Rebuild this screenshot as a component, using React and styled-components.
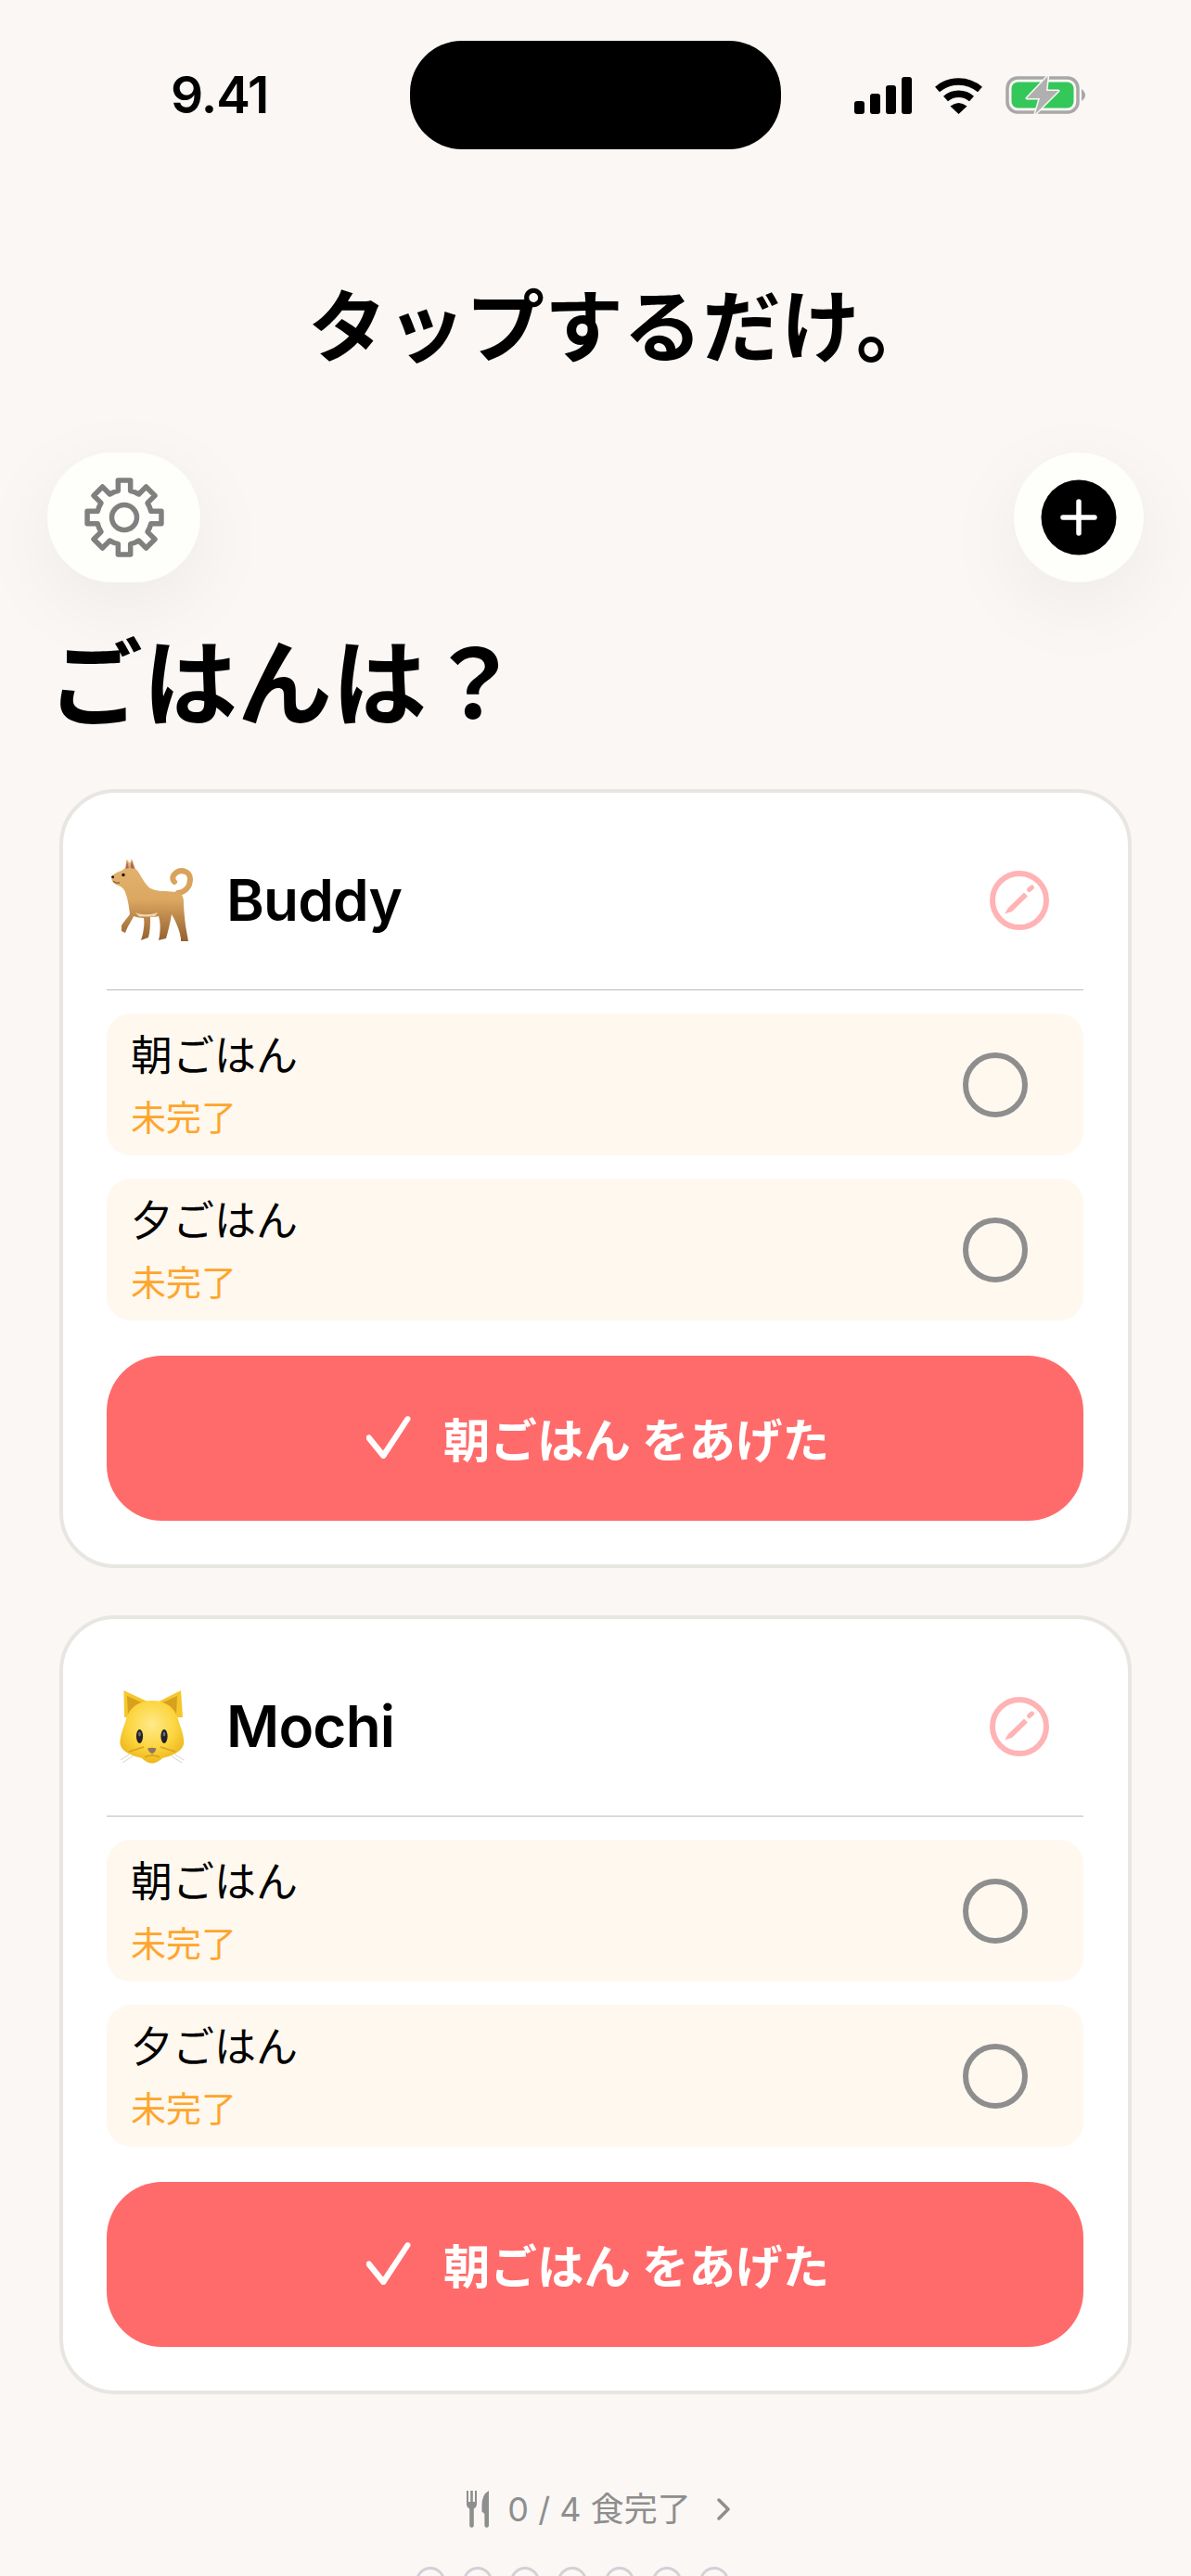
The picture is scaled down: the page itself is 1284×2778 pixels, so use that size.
import React from "react";
import styled, { createGlobalStyle } from "styled-components";

const GlobalStyle = createGlobalStyle`
  html, body {
    margin: 0;
    padding: 0;
    background: #faf7f4;
  }
  body {
    font-family: Inter, "Noto Sans CJK JP", sans-serif;
    color: #000;
  }
`;

const Page = styled.div`
  width: 1284px;
  height: 2778px;
  overflow: hidden;
  background: #faf7f4;
`;

const StatusBar = styled.div`
  display: grid;
  grid-template-columns: 258px 400px 1fr;
  align-items: center;
  padding: 44px 0 0 184px;
`;

const Time = styled.div`
  font-size: 55px;
  font-weight: 600;
  line-height: 1;
  letter-spacing: -1px;
`;

const Island = styled.div`
  height: 117px;
  background: #000;
  border-radius: 56px;
`;

const StatusIcons = styled.div`
  display: flex;
  align-items: center;
  gap: 24px;
  padding-left: 79px;
`;

const Title = styled.h1`
  margin: 151px 0 0;
  padding-left: 56px;
  font-size: 85px;
  line-height: 84px;
  font-weight: 700;
  text-align: center;
`;

const Toolbar = styled.div`
  display: flex;
  justify-content: space-between;
  align-items: center;
  padding: 0 51px;
  margin-top: 92px;
`;

const RoundButton = styled.button`
  display: flex;
  align-items: center;
  justify-content: center;
  width: ${(p) => p.$w}px;
  height: 140px;
  padding: 0;
  border: none;
  border-radius: 70px;
  background: #fefefa;
  box-shadow: 0 24px 90px rgba(0, 0, 0, 0.06);
`;

const Heading = styled.h2`
  margin: 60px 0 0;
  padding-left: 52px;
  font-size: 102px;
  line-height: 100px;
  font-weight: 700;
`;

const CardList = styled.div`
  display: flex;
  flex-direction: column;
  gap: 51px;
  padding: 0 64px;
  margin-top: 63px;
`;

const Card = styled.section`
  padding: 0 48px 47px 47px;
  background: #fff;
  border: 4px solid #e8e6e1;
  border-radius: 60px;
`;

const CardHeader = styled.div`
  display: flex;
  align-items: center;
  height: 213px;
  padding: 20px 37px 0 5px;
  border-bottom: 1px solid #bcbcbf;
  box-sizing: border-box;
`;

const Emoji = styled.div`
  display: flex;
  justify-content: center;
  width: 88px;
  margin-right: 36px;
`;

const PetName = styled.div`
  flex: 1;
  font-size: 62px;
  font-weight: 600;
  line-height: 1;
  letter-spacing: -0.8px;
`;

const MealList = styled.div`
  display: flex;
  flex-direction: column;
  gap: 25px;
  margin-top: 25px;
`;

const MealRow = styled.div`
  display: flex;
  align-items: center;
  justify-content: space-between;
  height: 153px;
  padding: 0 60px 0 26px;
  background: #fef8ef;
  border-radius: 26px;
`;

const MealText = styled.div`
  display: flex;
  flex-direction: column;
  gap: 18px;
  margin-top: 2px;
`;

const MealName = styled.div`
  font-size: 45px;
  line-height: 50px;
`;

const MealStatus = styled.div`
  font-size: 38px;
  line-height: 46px;
  color: #ffa52b;
`;

const CheckCircle = styled.div`
  width: 70px;
  height: 70px;
  box-sizing: border-box;
  border: 6.5px solid #8e8e8e;
  border-radius: 50%;
`;

const FeedButton = styled.button`
  display: flex;
  align-items: center;
  justify-content: center;
  gap: 34px;
  width: 100%;
  height: 178px;
  margin-top: 38px;
  padding: 0 0 3px 5px;
  border: none;
  border-radius: 60px;
  background: #ff6b6b;
  color: #fff;
  font-family: Inter, "Noto Sans CJK JP", sans-serif;
  font-size: 50.5px;
  font-weight: 700;
`;

const Summary = styled.div`
  display: flex;
  align-items: center;
  justify-content: center;
  margin-top: 104px;
  padding-left: 6px;
  color: #8e8e8e;
  font-size: 36px;
  line-height: 40px;
`;

const SummaryText = styled.span`
  margin: 0 28px 0 20px;
`;

const Dots = styled.div`
  display: flex;
  justify-content: center;
  gap: 19px;
  margin-top: 42px;
  padding-right: 50px;
`;

const Dot = styled.div`
  width: 32px;
  height: 32px;
  box-sizing: border-box;
  border: 3px solid #d1d1d6;
  border-radius: 50%;
`;

// 8 tooth gear outline, easier to compute than to write by hand
const gearPath = (() => {
  const c = 43;
  const pt = (r, deg) => {
    const a = (deg * Math.PI) / 180;
    return `${(c + r * Math.cos(a)).toFixed(2)} ${(c + r * Math.sin(a)).toFixed(2)}`;
  };
  let d = "";
  for (let i = 0; i < 8; i++) {
    const a = i * 45 - 90;
    d += `${i === 0 ? "M" : "L"}${pt(29.5, a - 22.5)} `;
    d += `L${pt(29.5, a - 13)} L${pt(40.5, a - 9.5)} L${pt(40.5, a + 9.5)} L${pt(29.5, a + 13)} `;
  }
  return d + "Z";
})();

function GearIcon() {
  return (
    <svg width="86" height="86" viewBox="0 0 86 86" fill="none" stroke="#808080" strokeWidth="5.5" strokeLinejoin="round">
      <path d={gearPath} />
      <circle cx="43" cy="43" r="13.5" />
    </svg>
  );
}

function PlusIcon() {
  return (
    <svg width="82" height="82" viewBox="0 0 82 82">
      <circle cx="41" cy="41" r="40.5" fill="#000" />
      <path d="M41 24V58M24 41H58" stroke="#fff" strokeWidth="5.5" strokeLinecap="round" />
    </svg>
  );
}

function SignalIcon() {
  return (
    <svg width="62" height="40" viewBox="0 0 62 40" fill="#000">
      <rect x="0" y="26" width="11" height="14" rx="3" />
      <rect x="17" y="18" width="11" height="22" rx="3" />
      <rect x="34" y="9" width="11" height="31" rx="3" />
      <rect x="51" y="0" width="11" height="40" rx="3" />
    </svg>
  );
}

function WifiIcon() {
  return (
    <svg width="53" height="40" viewBox="0 0 53 40" fill="none" stroke="#000">
      <path d="M3.5 13.5A35 35 0 0 1 49.5 13.5" strokeWidth="7.5" />
      <path d="M12.5 23.5A21 21 0 0 1 40.5 23.5" strokeWidth="7.5" />
      <path d="M17.5 31.5Q26.5 24.5 35.5 31.5L26.5 40Z" fill="#000" stroke="none" />
    </svg>
  );
}

function BatteryIcon() {
  return (
    <svg width="87" height="42" viewBox="0 0 87 42" fill="none">
      <rect x="2" y="2" width="76" height="37" rx="11" stroke="#a8a8a8" strokeWidth="3.5" />
      <rect x="6.5" y="6.5" width="67" height="28" rx="7" fill="#34c759" />
      <path d="M82 14Q86 17 86 20.5Q86 24 82 27Z" fill="#a8a8a8" />
      <path d="M45.7 0L23 24H37L32 41L57 16H44Z" fill="#b0b0b0" stroke="#faf7f4" strokeWidth="3" strokeLinejoin="round" paintOrder="stroke" />
    </svg>
  );
}

function EditIcon() {
  return (
    <svg width="64" height="64" viewBox="0 0 64 64" fill="none" stroke="#ffb3b5">
      <circle cx="32" cy="32" r="29" strokeWidth="6" />
      <path d="M16 46.5L20 40L37 23.5L41 27.5L24 44Z" fill="#ffb3b5" stroke="none" />
      <path d="M42.5 20.5L45.5 18" strokeWidth="5" strokeLinecap="round" />
    </svg>
  );
}

function CheckIcon() {
  return (
    <svg width="50" height="48" viewBox="0 0 50 48" fill="#fff">
      <path d="M1 23.5C1.5 21 5 20.5 6.5 23L19 38.5L43 2.5C45 0 49.5 1.5 48.5 5L22 45.5C20.5 47.5 18 47.5 16.5 45.5L1.5 27Q0.5 25 1 23.5Z" />
    </svg>
  );
}

function MealIcon() {
  return (
    <svg width="24" height="40" viewBox="0 0 24 40" fill="#8e8e8e">
      <path d="M0 0H2V12H4.2V0H6.8V12H9V0H11V14Q11 18 7.8 19.5V37.5A2.3 2.3 0 0 1 3.2 37.5V19.5Q0 18 0 14Z" />
      <path d="M24 0V37.5A2.3 2.3 0 0 1 19.4 37.5V25L16.5 22.5V16Q16.5 4 24 0Z" />
    </svg>
  );
}

function ChevronIcon() {
  return (
    <svg width="14" height="24" viewBox="0 0 14 24" fill="none" stroke="#8e8e8e" strokeWidth="3.5" strokeLinecap="round" strokeLinejoin="round">
      <path d="M2 2L12 12L2 22" />
    </svg>
  );
}

function DogEmoji() {
  return (
    <svg width="88" height="90" viewBox="0 0 88 90" fill="none">
      <defs>
        <linearGradient id="dogBody" x1="0" y1="0" x2="0" y2="1">
          <stop offset="0" stopColor="#e4b571" />
          <stop offset="0.5" stopColor="#dba761" />
          <stop offset="0.72" stopColor="#bb864a" />
          <stop offset="1" stopColor="#94612f" />
        </linearGradient>
      </defs>
      <path d="M72 37C80 36 85 30 85 22C85 14 76 11 70 15C66 18 65 22 68 25" stroke="#d9a35c" strokeWidth="6" strokeLinecap="round" />
      <path d="M0.5 19C3 16 7 14 11 13L15 10L16.5 0.5L20 5L22 0L26 11C30 14 33 22 38 28C42 34 50 35 58 35L70 36C75 36 78 40 78 47C78 55 79 62 80 72L83 89L75 89L75 86C74 80 72 72 65 60C64 66 62 76 59 86L51 88L52 83C53 76 53 68 51 62C48 63 45 63 42 63C42 70 42 78 40 85L32 88L34 81C35 75 36 69 35 64C31 64 27 63 24 62C22 67 18 72 15 80L11 78L11 72C14 67 18 63 20 60C19 52 18 44 15 36C13 32 11 30 8 29C4 28 1 25 0.5 23Z" fill="url(#dogBody)" />
      <path d="M17 3L19 10L15.5 11Z" fill="#a8695e" />
      <path d="M22 2L25 11L20.5 10Z" fill="#a8695e" />
      <path d="M26 58C32 61 42 61 50 58L47 62.5H30Z" fill="#eed7aa" />
      <circle cx="13" cy="17.5" r="1.7" fill="#1d1209" />
      <circle cx="1.6" cy="19.8" r="1.5" fill="#2a1a10" />
      <path d="M2 24.5Q6 27 9 26" stroke="#6a4524" strokeWidth="1" />
    </svg>
  );
}

function CatEmoji() {
  return (
    <svg width="70" height="80" viewBox="0 0 70 80" fill="none">
      <defs>
        <radialGradient id="catFace" cx="0.5" cy="0.38" r="0.62">
          <stop offset="0" stopColor="#ffe98a" />
          <stop offset="0.6" stopColor="#fcd53f" />
          <stop offset="1" stopColor="#eeb71c" />
        </radialGradient>
      </defs>
      <path d="M4.5 1L30 13H42L66 1L68 30L5 30Z" fill="#f5c72c" />
      <path d="M8 7L26 15L9 27Z" fill="#d7a01d" />
      <path d="M62 7L44 15L61 27Z" fill="#d7a01d" />
      <path d="M35 12C50 12 60 20 63 32C66 42 70 50 69 59C67 67 56 72 46 74C42 78 38 79.5 35 79.5C32 79.5 28 78 24 74C14 72 2 67 0.5 59C0 50 4 42 7 32C10 20 20 12 35 12Z" fill="url(#catFace)" />
      <path d="M10 67L26 62M60 67L44 62M35 72L35 69M27 73Q35 69 43 73" stroke="#d8a11f" strokeWidth="1.4" />
      <ellipse cx="21.5" cy="50.5" rx="3.6" ry="7.4" fill="#23232b" />
      <ellipse cx="48" cy="50.5" rx="3.6" ry="7.4" fill="#23232b" />
      <ellipse cx="21.5" cy="48" rx="1.4" ry="2.6" fill="#6d6d78" />
      <ellipse cx="48" cy="48" rx="1.4" ry="2.6" fill="#6d6d78" />
      <path d="M30 63.5Q35 62 39.5 63.5Q38 68.5 35 69Q32 68.5 30 63.5Z" fill="#8b7766" />
      <path d="M1 76L12 69M3 79L14 72M69 76L58 69M67 79L56 72" stroke="#d9d4c6" strokeWidth="1" />
    </svg>
  );
}

const pets = [
  { name: "Buddy", Icon: DogEmoji },
  { name: "Mochi", Icon: CatEmoji },
];

const meals = ["朝ごはん", "夕ごはん"];

export default function App() {
  return (
    <Page>
      <GlobalStyle />
      <StatusBar>
        <Time>9.41</Time>
        <Island />
        <StatusIcons>
          <SignalIcon />
          <WifiIcon />
          <BatteryIcon />
        </StatusIcons>
      </StatusBar>

      <Title>タップするだけ。</Title>

      <Toolbar>
        <RoundButton $w={165}>
          <GearIcon />
        </RoundButton>
        <RoundButton $w={140}>
          <PlusIcon />
        </RoundButton>
      </Toolbar>

      <Heading>ごはんは？</Heading>

      <CardList>
        {pets.map(({ name, Icon }) => (
          <Card key={name}>
            <CardHeader>
              <Emoji>
                <Icon />
              </Emoji>
              <PetName>{name}</PetName>
              <EditIcon />
            </CardHeader>
            <MealList>
              {meals.map((meal) => (
                <MealRow key={meal}>
                  <MealText>
                    <MealName>{meal}</MealName>
                    <MealStatus>未完了</MealStatus>
                  </MealText>
                  <CheckCircle />
                </MealRow>
              ))}
            </MealList>
            <FeedButton>
              <CheckIcon />
              朝ごはん をあげた
            </FeedButton>
          </Card>
        ))}
      </CardList>

      <Summary>
        <MealIcon />
        <SummaryText>0 / 4 食完了</SummaryText>
        <ChevronIcon />
      </Summary>

      <Dots>
        {[0, 1, 2, 3, 4, 5, 6].map((i) => (
          <Dot key={i} />
        ))}
      </Dots>
    </Page>
  );
}
